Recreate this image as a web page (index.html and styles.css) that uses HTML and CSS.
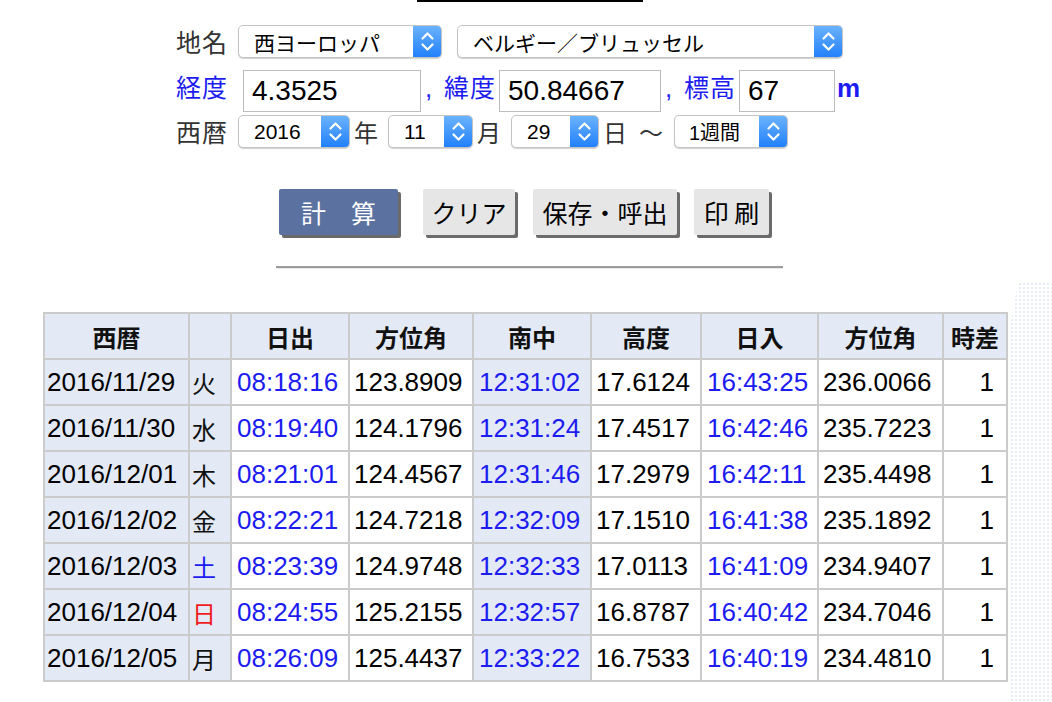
FILE: index.html
```html
<!DOCTYPE html>
<html lang="ja">
<head>
<meta charset="utf-8">
<title>日の出日の入り</title>
<link rel="stylesheet" href="styles.css">
</head>
<body>
<div class="topbar"></div>
<div class="form">
  <div class="row r1">
    <span class="lbl">地名</span>
    <div class="sel s-area"><span class="val">西ヨーロッパ</span><span class="arr"><svg viewBox="0 0 29 33" width="29" height="33"><polyline points="9.5,13.5 14.5,8.5 19.5,13.5"/><polyline points="9.5,19.5 14.5,24.5 19.5,19.5"/></svg></span></div>
    <div class="sel s-city"><span class="val">ベルギー／ブリュッセル</span><span class="arr"><svg viewBox="0 0 29 33" width="29" height="33"><polyline points="9.5,13.5 14.5,8.5 19.5,13.5"/><polyline points="9.5,19.5 14.5,24.5 19.5,19.5"/></svg></span></div>
  </div>
  <div class="row r2">
    <span class="lbl blue">経度</span>
    <input class="inp i-lon" type="text" value="4.3525">
    <span class="comma">,</span>
    <span class="lbl blue">緯度</span>
    <input class="inp i-lat" type="text" value="50.84667">
    <span class="comma">,</span>
    <span class="lbl blue">標高</span>
    <input class="inp i-alt" type="text" value="67">
    <span class="unit">m</span>
  </div>
  <div class="row r3">
    <span class="lbl">西暦</span>
    <div class="sel s-year"><span class="val">2016</span><span class="arr"><svg viewBox="0 0 29 33" width="29" height="33"><polyline points="9.5,13.5 14.5,8.5 19.5,13.5"/><polyline points="9.5,19.5 14.5,24.5 19.5,19.5"/></svg></span></div>
    <span class="unit-j">年</span>
    <div class="sel s-mon"><span class="val">11</span><span class="arr"><svg viewBox="0 0 29 33" width="29" height="33"><polyline points="9.5,13.5 14.5,8.5 19.5,13.5"/><polyline points="9.5,19.5 14.5,24.5 19.5,19.5"/></svg></span></div>
    <span class="unit-j">月</span>
    <div class="sel s-day"><span class="val">29</span><span class="arr"><svg viewBox="0 0 29 33" width="29" height="33"><polyline points="9.5,13.5 14.5,8.5 19.5,13.5"/><polyline points="9.5,19.5 14.5,24.5 19.5,19.5"/></svg></span></div>
    <span class="unit-j">日</span>
    <span class="tilde">〜</span>
    <div class="sel s-per"><span class="val">1週間</span><span class="arr"><svg viewBox="0 0 29 33" width="29" height="33"><polyline points="9.5,13.5 14.5,8.5 19.5,13.5"/><polyline points="9.5,19.5 14.5,24.5 19.5,19.5"/></svg></span></div>
  </div>
</div>

<div class="buttons">
  <button class="btn btn-calc">計　算</button>
  <button class="btn btn-clear">クリア</button>
  <button class="btn btn-save">保存・呼出</button>
  <button class="btn btn-print">印 刷</button>
</div>

<div class="sep"></div>

<table class="result">
  <colgroup>
    <col class="c-date"><col class="c-wd"><col class="c-rise"><col class="c-az1"><col class="c-tr"><col class="c-alt"><col class="c-set"><col class="c-az2"><col class="c-tz">
  </colgroup>
  <thead>
    <tr><th>西暦</th><th></th><th>日出</th><th>方位角</th><th>南中</th><th>高度</th><th>日入</th><th>方位角</th><th>時差</th></tr>
  </thead>
  <tbody>
    <tr><td class="date">2016/11/29</td><td class="wd">火</td><td class="time">08:18:16</td><td class="num">123.8909</td><td class="time tr">12:31:02</td><td class="num">17.6124</td><td class="time">16:43:25</td><td class="num">236.0066</td><td class="tz">1</td></tr>
    <tr><td class="date">2016/11/30</td><td class="wd">水</td><td class="time">08:19:40</td><td class="num">124.1796</td><td class="time tr">12:31:24</td><td class="num">17.4517</td><td class="time">16:42:46</td><td class="num">235.7223</td><td class="tz">1</td></tr>
    <tr><td class="date">2016/12/01</td><td class="wd">木</td><td class="time">08:21:01</td><td class="num">124.4567</td><td class="time tr">12:31:46</td><td class="num">17.2979</td><td class="time">16:42:11</td><td class="num">235.4498</td><td class="tz">1</td></tr>
    <tr><td class="date">2016/12/02</td><td class="wd">金</td><td class="time">08:22:21</td><td class="num">124.7218</td><td class="time tr">12:32:09</td><td class="num">17.1510</td><td class="time">16:41:38</td><td class="num">235.1892</td><td class="tz">1</td></tr>
    <tr><td class="date">2016/12/03</td><td class="wd sat">土</td><td class="time">08:23:39</td><td class="num">124.9748</td><td class="time tr">12:32:33</td><td class="num">17.0113</td><td class="time">16:41:09</td><td class="num">234.9407</td><td class="tz">1</td></tr>
    <tr><td class="date">2016/12/04</td><td class="wd sun">日</td><td class="time">08:24:55</td><td class="num">125.2155</td><td class="time tr">12:32:57</td><td class="num">16.8787</td><td class="time">16:40:42</td><td class="num">234.7046</td><td class="tz">1</td></tr>
    <tr><td class="date">2016/12/05</td><td class="wd">月</td><td class="time">08:26:09</td><td class="num">125.4437</td><td class="time tr">12:33:22</td><td class="num">16.7533</td><td class="time">16:40:19</td><td class="num">234.4810</td><td class="tz">1</td></tr>
  </tbody>
</table>
<div class="deco"></div>
</body>
</html>
```

FILE: styles.css
```css
html, body {
  margin: 0;
  padding: 0;
  background: #ffffff;
}
body {
  font-family: "Liberation Sans", "Noto Sans CJK JP", sans-serif;
  color: #000;
  position: relative;
  min-height: 702px;
  overflow: hidden;
}

.topbar {
  width: 226px;
  height: 2px;
  background: #000;
  margin-left: 417px;
}

.form {
  width: 700px;
  margin: 23px 0 0 176px;
}
.row {
  display: flex;
  align-items: center;
}
.r1 { height: 33px; }
.r2 { height: 42px; margin-top: 12px; }
.r3 { height: 33px; margin-top: 3px; }

.lbl {
  font-family: "Noto Sans CJK JP", sans-serif;
  font-size: 25px;
  line-height: 33px;
  width: 52px;
  color: #333;
  letter-spacing: 1px;
  white-space: nowrap;
}
.lbl.blue { color: #1c1cf0; }
.r2 .lbl { margin-bottom: 10px; }

.sel {
  position: relative;
  display: flex;
  align-items: center;
  height: 33px;
  box-sizing: border-box;
  background: #fff;
  border: 1px solid #c4c4c4;
  border-radius: 5px;
  box-shadow: 0 1px 1px rgba(0,0,0,0.18);
  font-size: 21px;
  color: #000;
  overflow: hidden;
}
.sel .val {
  flex: 1;
  padding-left: 15px;
  white-space: nowrap;
}
.sel .arr {
  width: 29px;
  height: 33px;
  flex: none;
  margin: -1px -1px -1px 0;
  background: linear-gradient(#6db4fd, #1f7ffa);
  display: flex;
}
.sel .arr svg polyline {
  fill: none;
  stroke: #fff;
  stroke-width: 2.2;
  stroke-linecap: round;
  stroke-linejoin: round;
}
.s-area { width: 204px; margin-left: 10px; }
.s-city { width: 386px; margin-left: 15px; }
.s-year { width: 112px; margin-left: 10px; }
.s-mon { width: 85px; margin-left: 10px; }
.s-day { width: 88px; margin-left: 10px; }
.s-per { width: 114px; margin-left: 11px; }
.s-per .val { font-size: 20px; padding-left: 14px; }

.inp {
  height: 42px;
  box-sizing: border-box;
  border: 1px solid #bdbdbd;
  border-radius: 0;
  padding: 0 0 0 8px;
  font-family: "Liberation Sans", sans-serif;
  font-size: 28px;
  color: #000;
  background: #fff;
  outline: none;
}
.i-lon { width: 178px; margin-left: 15px; }
.i-lat { width: 162px; margin-left: 3px; }
.i-alt { width: 96px; margin-left: 3px; }

.comma {
  color: #1c1cf0;
  font-size: 26px;
  width: 23px;
  padding-left: 4px;
  box-sizing: border-box;
  margin-bottom: 6px;
}
.unit {
  color: #1c1cf0;
  font-size: 26px;
  font-weight: 700;
  margin-left: 2px;
  margin-bottom: 6px;
}
.unit-j {
  font-family: "Noto Sans CJK JP", sans-serif;
  font-size: 24px;
  color: #333;
  margin-left: 4px;
}
.tilde {
  font-family: "Noto Sans CJK JP", sans-serif;
  font-size: 24px;
  color: #333;
  margin-left: 12px;
}

.buttons {
  display: flex;
  margin: 41px 0 0 279px;
  height: 46px;
}
.btn {
  height: 46px;
  border: none;
  border-radius: 2px;
  font-family: "Noto Sans CJK JP", sans-serif;
  font-size: 25px;
  color: #000;
  background: #e6e6e6;
  box-shadow: 3px 3px 0 #6b6b6b;
  padding: 0;
  cursor: pointer;
  white-space: nowrap;
}
.btn-calc {
  width: 119px;
  background: #5b72a1;
  color: #fff;
}
.btn-clear { width: 92px; margin-left: 25px; }
.btn-save { width: 144px; margin-left: 18px; }
.btn-print { width: 75px; margin-left: 17px; }

.sep {
  width: 507px;
  height: 2px;
  background: #9c9c9c;
  border-bottom: 1px solid #e8e8e8;
  margin: 31px 0 0 276px;
}

.result {
  border-collapse: collapse;
  table-layout: fixed;
  width: 963px;
  margin: 43px 0 0 43px;
  border: 2px solid #cbcbcb;
  font-size: 26px;
}
.result th, .result td {
  border: 2px solid #cbcbcb;
  height: 44px;
  padding: 0;
  white-space: nowrap;
  overflow: hidden;
}
.result th {
  background: #e3e9f5;
  font-family: "Noto Sans CJK JP", sans-serif;
  font-weight: 700;
  font-size: 24px;
  text-align: center;
  color: #111;
}
.c-date { width: 145px; }
.c-wd { width: 42px; }
.c-rise { width: 118px; }
.c-az1 { width: 124px; }
.c-tr { width: 118px; }
.c-alt { width: 110px; }
.c-set { width: 117px; }
.c-az2 { width: 125px; }
.c-tz { width: 64px; }

.result td.date {
  background: #e3e9f5;
  padding-left: 2px;
}
.result td.wd {
  background: #e3e9f5;
  font-family: "Noto Sans CJK JP", sans-serif;
  font-size: 24px;
  padding-left: 2px;
  color: #111;
}
.result td.wd.sat { color: #1c1cf0; }
.result td.wd.sun { color: #f01c1c; }
.result td.time {
  color: #1c1cf0;
  padding-left: 5px;
}
.result td.time.tr { background: #e3e9f5; }
.result td.num {
  padding-left: 4px;
}
.result td.tz {
  text-align: right;
  padding-right: 12px;
}

.deco {
  position: absolute;
  right: 0;
  top: 282px;
  width: 42px;
  height: 420px;
  background-image: radial-gradient(circle, #e3ecf8 1px, transparent 1.3px);
  background-size: 4px 4px;
  clip-path: polygon(20% 0, 100% 0, 100% 100%, 0 100%, 0 10%);
  pointer-events: none;
}
```
